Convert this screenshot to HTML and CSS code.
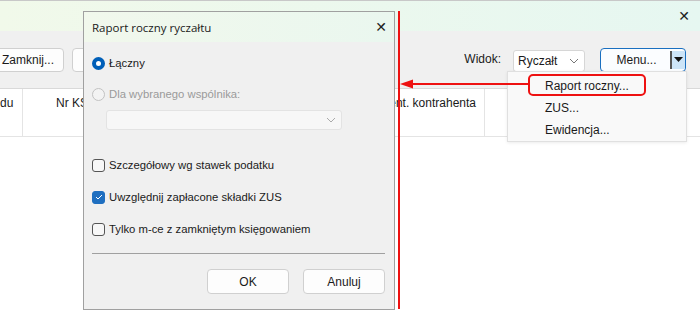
FILE: index.html
```html
<!DOCTYPE html>
<html lang="pl">
<head>
    <meta charset="UTF-8">
    <title>Raport roczny ryczałtu</title>
    <link rel="stylesheet" href="styles.css">
</head>
<body>
    <div class="window">
        <div class="window-title">
            <span class="close-x">&#x2715;</span>
        </div>
        <div class="toolbar">
            <button class="btn btn-first">Zamknij...</button>
            <button class="btn btn-second"></button>
            <div class="spacer"></div>
            <span class="view-label">Widok:</span>
            <div class="select">
                <span>Ryczałt</span>
                <svg class="chevron" width="10" height="6" viewBox="0 0 10 6"><path d="M1 1l4 4 4-4" fill="none" stroke="#777" stroke-width="1"/></svg>
            </div>
            <div class="menu-btn">
                <span class="menu-label">Menu...</span>
                <span class="menu-split">
                    <svg width="9" height="5" viewBox="0 0 9 5"><path d="M0 0h9L4.5 5z" fill="#111"/></svg>
                </span>
            </div>
        </div>
        <div class="grid-header">
            <div class="col col-1">du</div>
            <div class="col col-2">Nr KSeF</div>
            <div class="col col-3">Ident. kontrahenta</div>
            <div class="col col-4"></div>
        </div>
    </div>

    <div class="dropdown">
        <div class="dropdown-item">Raport roczny...</div>
        <div class="dropdown-item">ZUS...</div>
        <div class="dropdown-item">Ewidencja...</div>
    </div>

    <div class="dialog">
        <div class="dialog-title">
            <span>Raport roczny ryczałtu</span>
            <span class="close-x">&#x2715;</span>
        </div>
        <div class="dialog-body">
            <label class="option">
                <span class="radio checked"></span>
                <span>Łączny</span>
            </label>
            <label class="option disabled">
                <span class="radio"></span>
                <span>Dla wybranego wspólnika:</span>
            </label>
            <div class="combo">
                <svg width="10" height="6" viewBox="0 0 10 6"><path d="M1 1l4 4 4-4" fill="none" stroke="#aaa" stroke-width="1"/></svg>
            </div>
            <label class="option check-row">
                <span class="check"></span>
                <span>Szczegółowy wg stawek podatku</span>
            </label>
            <label class="option check-row">
                <span class="check checked">
                    <svg width="8" height="6" viewBox="0 0 8 6"><path d="M1 3l2 2 4-4" fill="none" stroke="#fff" stroke-width="1"/></svg>
                </span>
                <span>Uwzględnij zapłacone składki ZUS</span>
            </label>
            <label class="option check-row">
                <span class="check"></span>
                <span>Tylko m-ce z zamkniętym księgowaniem</span>
            </label>
            <div class="separator"></div>
            <div class="dialog-buttons">
                <button class="btn dlg-btn">OK</button>
                <button class="btn dlg-btn">Anuluj</button>
            </div>
        </div>
    </div>

    <div class="highlight"></div>
    <svg class="annotation" width="140" height="300" viewBox="0 0 140 300">
        <rect x="0" y="0" width="2" height="298" fill="#ee1111"/>
        <rect x="12" y="72" width="118" height="2" fill="#ee1111"/>
        <path d="M2 73L15 68.5V77.5z" fill="#ee1111"/>
    </svg>
</body>
</html>
```

FILE: styles.css
```css
body {
    margin: 0;
    width: 700px;
    height: 317px;
    overflow: hidden;
    background: #fff;
    font-family: "Liberation Sans", Arial, sans-serif;
    font-size: 12px;
    color: #1a1a1a;
    position: relative;
}
.window {
    border-top: 1px solid #c8c8c8;
}
.window-title {
    height: 30px;
    background: linear-gradient(to right, #f1f9ea, #e6f7f1);
    display: flex;
    justify-content: flex-end;
    align-items: center;
}
.close-x {
    font-family: "DejaVu Sans", sans-serif;
    font-size: 14px;
    color: #222;
    padding-right: 10px;
}
.toolbar {
    height: 57px;
    background: #f0f0f0;
    display: flex;
    align-items: center;
    padding-right: 14px;
    border-bottom: 1px solid #d9d9d9;
}
.btn {
    font-family: "Liberation Sans", Arial, sans-serif;
    font-size: 12px;
    background: #fdfdfd;
    border: 1px solid #d0d0d0;
    border-radius: 4px;
    height: 24px;
    padding: 0;
    color: #1a1a1a;
}
.btn-first {
    width: 85px;
    margin-left: -21px;
    text-align: left;
    padding-left: 22px;
}
.btn-second {
    width: 80px;
    margin-left: 8px;
}
.spacer {
    flex: 1;
}
.view-label {
    margin-right: 12px;
    margin-bottom: 2px;
}
.select {
    display: flex;
    align-items: center;
    justify-content: space-between;
    padding: 0 5px 0 4px;
    margin-right: 15px;
    margin-top: 2px;
    box-sizing: border-box;
    width: 72px;
    height: 22px;
    border: 1px solid #d6d6d6;
    border-radius: 3px;
    background: #fff;
}
.menu-btn {
    width: 86px;
    height: 24px;
    box-sizing: border-box;
    border: 1px solid #1a6fc0;
    border-radius: 4px;
    background: #fbfdff;
    display: flex;
    overflow: hidden;
}
.menu-label {
    flex: 1;
    display: flex;
    align-items: center;
    justify-content: center;
    padding-left: 2px;
}
.menu-split {
    width: 13px;
    background: #cce4f7;
    border-left: 2px solid #555;
    display: flex;
    align-items: center;
    justify-content: center;
    margin: 2px 0;
}
.grid-header {
    display: flex;
    height: 47px;
    border-bottom: 1px solid #e4e4e4;
    background: #fff;
}
.col {
    border-right: 1px solid #e4e4e4;
    padding-top: 7px;
    box-sizing: border-box;
}
.col-1 {
    width: 23px;
}
.col-2 {
    width: 235px;
    padding-left: 33px;
    white-space: nowrap;
    overflow: hidden;
}
.col-3 {
    width: 227px;
    text-align: right;
    padding-right: 8px;
    white-space: nowrap;
}
.col-4 {
    width: 100px;
    border-right: none;
}
.dropdown {
    position: absolute;
    left: 507px;
    top: 71px;
    width: 180px;
    height: 71px;
    box-sizing: border-box;
    background: #f9f9f9;
    border: 1px solid #e0e0e0;
    box-shadow: 0 1px 3px rgba(0, 0, 0, 0.08);
    padding-top: 3px;
}
.dropdown-item {
    height: 22px;
    line-height: 22px;
    padding-left: 37px;
    font-size: 12px;
}
.dialog {
    position: absolute;
    left: 83px;
    top: 11px;
    width: 312px;
    height: 299px;
    box-sizing: border-box;
    border: 1px solid #a0a0a0;
    background: #f0f0f0;
}
.dialog-title {
    height: 30px;
    background: linear-gradient(to right, #f1f8ec, #eaf7ef);
    display: flex;
    align-items: center;
    justify-content: space-between;
    padding-left: 8px;
    font-family: "Open Sans", sans-serif;
    font-size: 11.5px;
}
.dialog-title .close-x {
    padding-right: 7px;
}
.dialog-body {
    padding: 14px 9px 0 8px;
    font-size: 11.3px;
}
.option {
    display: flex;
    align-items: center;
    gap: 4px;
    height: 14px;
}
.option.disabled {
    color: #9a9a9a;
    margin-top: 17px;
}
.radio {
    width: 13px;
    height: 13px;
    box-sizing: border-box;
    border-radius: 50%;
    border: 1px solid #c2c2c2;
    background: #f3f3f3;
}
.radio.checked {
    background: #fff;
    border: 4px solid #005fb8;
}
.combo {
    margin: 9px 0 0 14px;
    width: 236px;
    height: 20px;
    box-sizing: border-box;
    border: 1px solid #e3e3e3;
    border-radius: 3px;
    background: #f7f7f7;
    display: flex;
    align-items: center;
    justify-content: flex-end;
    padding-right: 5px;
}
.check-row {
    margin-top: 18px;
}
.combo + .check-row {
    margin-top: 28px;
}
.check {
    width: 13px;
    height: 13px;
    box-sizing: border-box;
    border: 1px solid #555;
    border-radius: 3px;
    background: #f7f7f7;
    display: flex;
    align-items: center;
    justify-content: center;
}
.check.checked {
    background: #1f6fc0;
    border-color: #1f6fc0;
}
.separator {
    margin-top: 17px;
    height: 1px;
    background: #a0a0a0;
}
.dialog-buttons {
    display: flex;
    justify-content: flex-end;
    gap: 14px;
    margin-top: 15px;
}
.dlg-btn {
    width: 82px;
    height: 25px;
    border-radius: 4px;
}
.highlight {
    position: absolute;
    left: 528px;
    top: 74px;
    width: 118px;
    height: 22px;
    box-sizing: border-box;
    border: 2px solid #ee1111;
    border-radius: 5px;
}
.annotation {
    position: absolute;
    left: 398px;
    top: 11px;
}
```
